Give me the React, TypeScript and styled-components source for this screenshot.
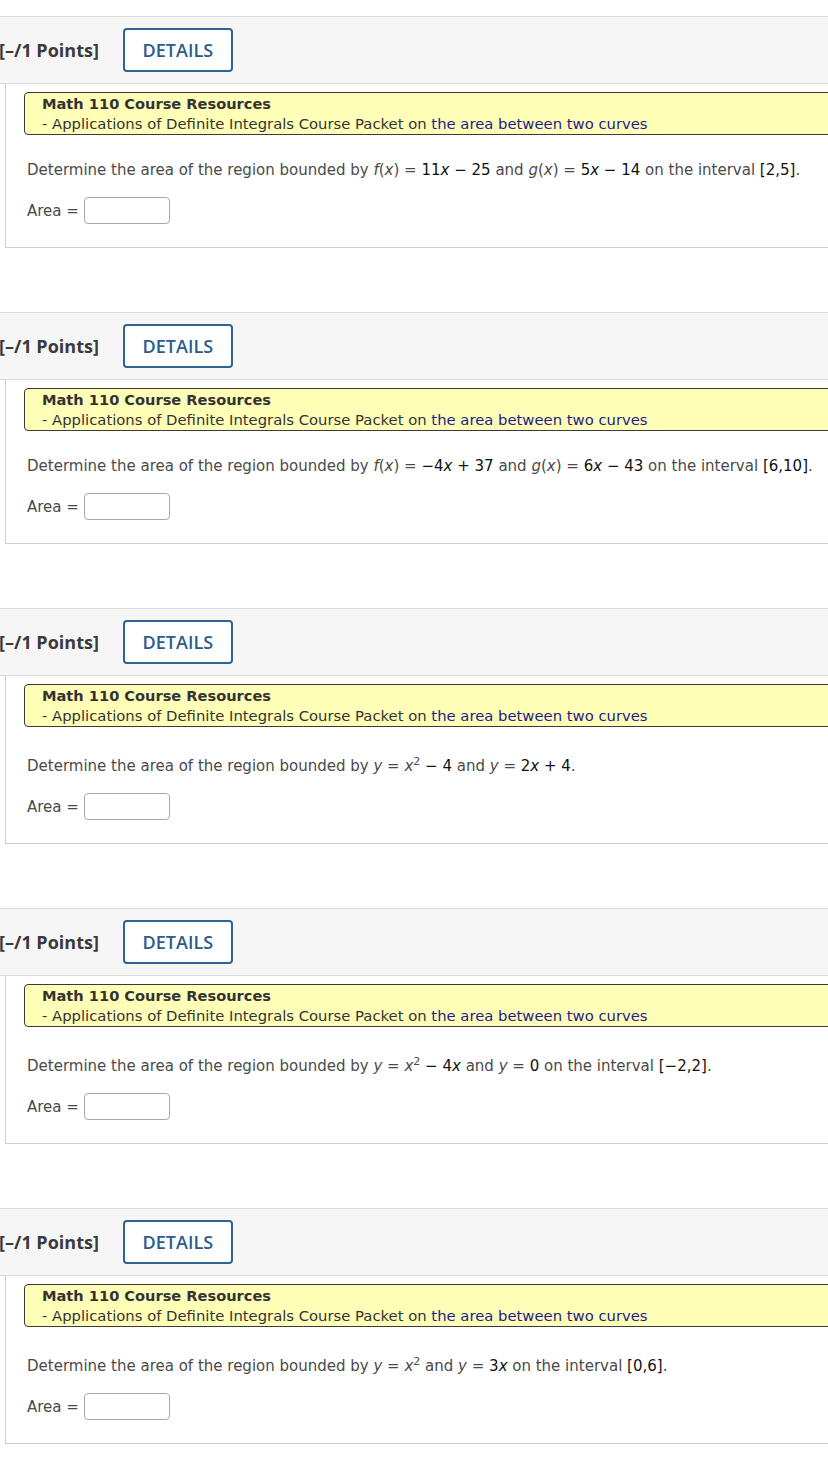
import * as React from 'react';
import styled, {createGlobalStyle} from 'styled-components';

const GlobalStyle = createGlobalStyle`
  html, body {
    margin: 0;
    padding: 0;
    background: #ffffff;
    overflow-x: hidden;
  }
  body {
    font-family: 'DejaVu Sans', Verdana, sans-serif;
  }
`;

const Page = styled.div`
  padding-top: 16px;
  padding-bottom: 40px;
`;

const Question = styled.section`
  margin-bottom: 64px;
`;

const Header = styled.div`
  display: flex;
  align-items: center;
  gap: 24px;
  height: 66px;
  background: #f6f6f6;
  border-top: 1px solid #dcdcdc;
  border-bottom: 1px solid #dcdcdc;
`;

const Points = styled.span`
  font-family: 'Open Sans', 'Liberation Sans', sans-serif;
  font-weight: 700;
  font-size: 18px;
  color: #3a3a3a;
  margin-left: -1px;
`;

const DetailsButton = styled.button`
  width: 110px;
  height: 44px;
  background: #ffffff;
  border: 2px solid #2e6494;
  border-radius: 4px;
  font-family: 'Open Sans', 'Liberation Sans', sans-serif;
  font-size: 18px;
  font-weight: 600;
  color: #2a5d8c;
  padding: 0;
`;

const Body = styled.div`
  margin-left: 5px;
  border-left: 1px solid #cfcfcf;
  border-bottom: 1px solid #cfcfcf;
  padding: 8px 0 23px 21px;
  overflow: hidden;
`;

const Resources = styled.div`
  margin-left: -3px;
  margin-right: -10px;
  background: #ffffb8;
  border: 1px solid #3a3a3a;
  border-radius: 4px;
  padding: 1px 0 0 17px;
  font-size: 14.8px;
  line-height: 20px;
  color: #333333;
`;

const ResourcesTitle = styled.div`
  font-weight: 700;
  font-size: 14.6px;
`;

const ResourceLink = styled.a`
  color: #1c1c8e;
  text-decoration: none;
`;

const Prompt = styled.p`
  margin: 25px 0 0 0;
  font-size: 15px;
  line-height: 20px;
  color: #4a4a4a;
  white-space: nowrap;
`;

const Var = styled.i`
  font-style: italic;
`;

const Val = styled.span`
  color: #111111;
`;

const Sup = styled.sup`
  font-size: 11px;
  vertical-align: super;
  color: #4a4a4a;
`;

const AnswerRow = styled.div`
  display: flex;
  align-items: center;
  margin-top: 17px;
  font-size: 15px;
  color: #4a4a4a;
  gap: 5px;
`;

const AnswerInput = styled.input`
  width: 86px;
  height: 27px;
  box-sizing: border-box;
  border: 1px solid #a8a8a8;
  border-radius: 4px;
  background: #ffffff;
  padding: 0 6px;
`;

type Item = {prompt: React.ReactNode};

const M = ({children}: {children: React.ReactNode}) => <Val>{children}</Val>;

const items: Item[] = [
  {
    prompt: (
      <>
        Determine the area of the region bounded by <Var>f</Var>(<Var>x</Var>) = <M>11<Var>x</Var> − 25</M> and{' '}
        <Var>g</Var>(<Var>x</Var>) = <M>5<Var>x</Var> − 14</M> on the interval <M>[2,5]</M>.
      </>
    ),
  },
  {
    prompt: (
      <>
        Determine the area of the region bounded by <Var>f</Var>(<Var>x</Var>) = <M>−4<Var>x</Var> + 37</M> and{' '}
        <Var>g</Var>(<Var>x</Var>) = <M>6<Var>x</Var> − 43</M> on the interval <M>[6,10]</M>.
      </>
    ),
  },
  {
    prompt: (
      <>
        Determine the area of the region bounded by <Var>y</Var> = <Var>x</Var>
        <Sup>2</Sup> <M>− 4</M> and <Var>y</Var> = <M>2<Var>x</Var> + 4</M>.
      </>
    ),
  },
  {
    prompt: (
      <>
        Determine the area of the region bounded by <Var>y</Var> = <Var>x</Var>
        <Sup>2</Sup> <M>− 4<Var>x</Var></M> and <Var>y</Var> = <M>0</M> on the interval <M>[−2,2]</M>.
      </>
    ),
  },
  {
    prompt: (
      <>
        Determine the area of the region bounded by <Var>y</Var> = <Var>x</Var>
        <Sup>2</Sup> and <Var>y</Var> = <M>3<Var>x</Var></M> on the interval <M>[0,6]</M>.
      </>
    ),
  },
];

const QuestionBlock = ({item}: {item: Item}) => (
  <Question>
    <Header>
      <Points>[–/1 Points]</Points>
      <DetailsButton>DETAILS</DetailsButton>
    </Header>
    <Body>
      <Resources>
        <ResourcesTitle>Math 110 Course Resources</ResourcesTitle>
        <div>
          - Applications of Definite Integrals Course Packet on{' '}
          <ResourceLink href="#">the area between two curves</ResourceLink>
        </div>
      </Resources>
      <Prompt>{item.prompt}</Prompt>
      <AnswerRow>
        <span>Area =</span>
        <AnswerInput type="text" />
      </AnswerRow>
    </Body>
  </Question>
);

const App = () => (
  <>
    <GlobalStyle />
    <Page>
      {items.map((item, i) => (
        <QuestionBlock key={i} item={item} />
      ))}
    </Page>
  </>
);

export default App;
